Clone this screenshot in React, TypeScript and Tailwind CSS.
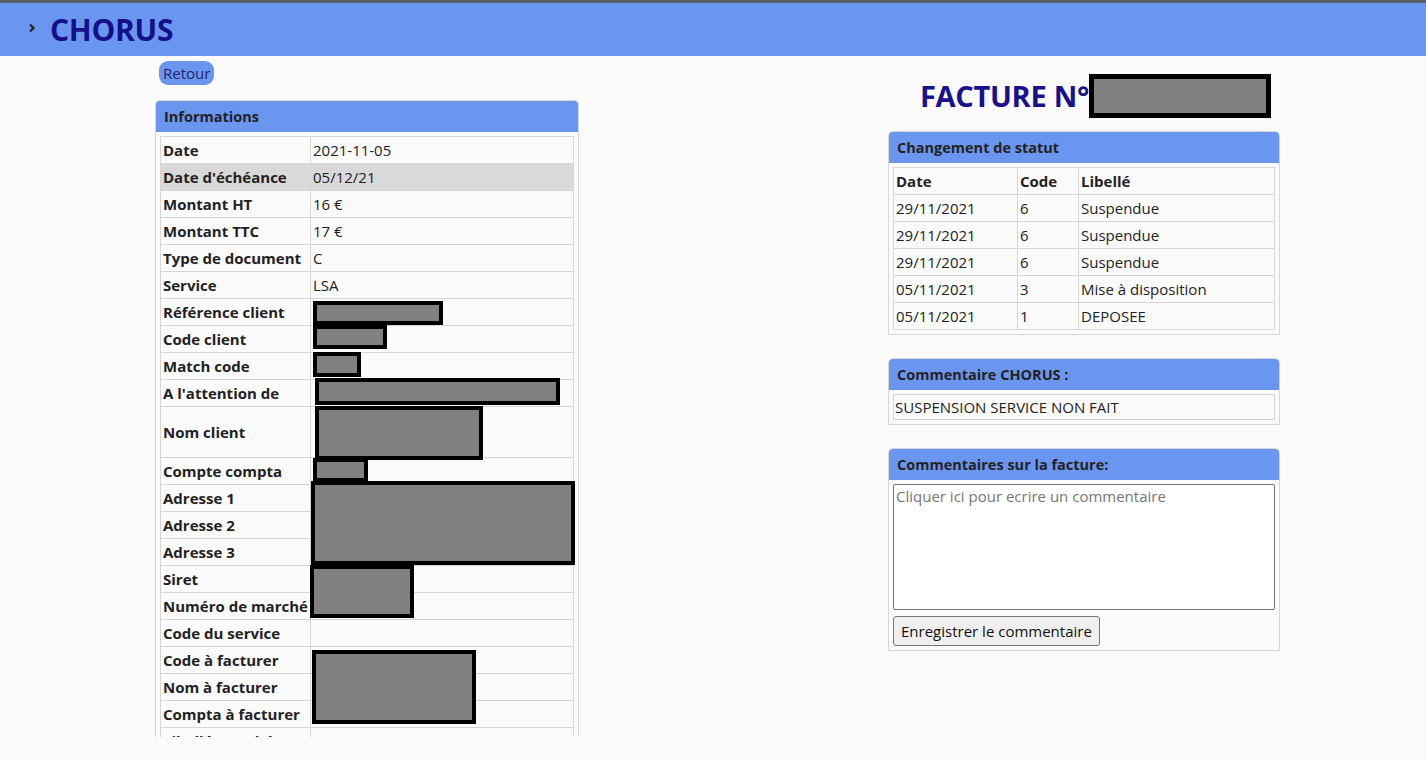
import React from "react";

type Row = { label: string; value?: string; tall?: boolean; shaded?: boolean };

const infoRows: Row[] = [
  { label: "Date", value: "2021-11-05" },
  { label: "Date d'échéance", value: "05/12/21", shaded: true },
  { label: "Montant HT", value: "16 €" },
  { label: "Montant TTC", value: "17 €" },
  { label: "Type de document", value: "C" },
  { label: "Service", value: "LSA" },
  { label: "Référence client" },
  { label: "Code client" },
  { label: "Match code" },
  { label: "A l'attention de" },
  { label: "Nom client", tall: true },
  { label: "Compte compta" },
  { label: "Adresse 1" },
  { label: "Adresse 2" },
  { label: "Adresse 3" },
  { label: "Siret" },
  { label: "Numéro de marché" },
  { label: "Code du service" },
  { label: "Code à facturer" },
  { label: "Nom à facturer" },
  { label: "Compta à facturer" },
  { label: "Libellé marché" },
];

// redacted blocks, relative to the informations table
const masks = [
  { l: 153, t: 165, w: 130, h: 24 },
  { l: 153, t: 189, w: 74, h: 24 },
  { l: 153, t: 216, w: 48, h: 25 },
  { l: 155, t: 242, w: 245, h: 27 },
  { l: 155, t: 270, w: 168, h: 54 },
  { l: 153, t: 322, w: 55, h: 24 },
  { l: 151, t: 345, w: 264, h: 84 },
  { l: 150, t: 429, w: 104, h: 53 },
  { l: 152, t: 514, w: 164, h: 74 },
];

const statuts = [
  ["29/11/2021", "6", "Suspendue"],
  ["29/11/2021", "6", "Suspendue"],
  ["29/11/2021", "6", "Suspendue"],
  ["05/11/2021", "3", "Mise à disposition"],
  ["05/11/2021", "1", "DEPOSEE"],
];

function Panel({ title, children, className = "" }: { title: string; children: React.ReactNode; className?: string }) {
  return (
    <div className={`border border-[#d6d6d6] rounded-t-[5px] bg-[#fbfbfb] ${className}`}>
      <div className="h-[31px] bg-[#6b96ef] rounded-t-[4px] px-[8px] flex items-center text-[14.5px] font-bold text-[#222]">
        {title}
      </div>
      <div className="p-[4px]">{children}</div>
    </div>
  );
}

const cell = "border border-[#d6d6d6] px-[2px] py-0 h-[27px] leading-[20px] align-middle text-left";

export default function App() {
  return (
    <div className="h-screen overflow-hidden bg-[#fbfbfb] font-['Open_Sans',sans-serif] text-[15px] text-[#222]">
      <div className="h-[3px] bg-[#565e68]" />
      <header className="h-[53px] bg-[#6b96ef] flex items-center pl-[28px]">
        <svg width="8" height="10" viewBox="0 0 8 10" className="mr-[14px] -mt-[4px]">
          <polyline points="2,1.5 5.5,5 2,8.5" fill="none" stroke="#222" strokeWidth="2.2" />
        </svg>
        <span className="text-[30px] font-bold text-[#14108a] tracking-[-0.3px]">CHORUS</span>
      </header>

      <div className="flex pl-[155px]">
        <div className="w-[424px]">
          <button className="ml-[4px] mt-[5px] h-[24px] px-[4px] rounded-[9px] bg-[#6b96ef] text-[15px] text-[#232370] leading-[24px]">
            Retour
          </button>
          <div className="mt-[15px] h-[637px] overflow-hidden">
            <Panel title="Informations" className="border-b-0">
              <div className="relative">
                <table className="w-full border-collapse border border-[#d6d6d6]">
                  <tbody>
                    {infoRows.map((r) => (
                      <tr key={r.label} className={r.shaded ? "bg-[#d9d9d9]" : ""}>
                        <td className={`${cell} w-[150px] font-bold whitespace-nowrap ${r.tall ? "h-[51px]" : ""}`}>{r.label}</td>
                        <td className={cell}>{r.value ?? ""}</td>
                      </tr>
                    ))}
                  </tbody>
                </table>
                {masks.map((m, i) => (
                  <div
                    key={i}
                    className="absolute border-[4px] border-black bg-[#808080]"
                    style={{ left: m.l, top: m.t, width: m.w, height: m.h }}
                  />
                ))}
              </div>
            </Panel>
          </div>
        </div>

        <div className="ml-[309px] w-[392px] pt-[18px]">
          <div className="flex items-center pl-[32px] h-[44px]">
            <span className="text-[29px] font-bold text-[#18108c] tracking-[-0.3px]">FACTURE N°</span>
            <span className="inline-block w-[182px] h-[44px] border-[5px] border-black bg-[#808080]" />
          </div>

          <Panel title="Changement de statut" className="mt-[13px]">
            <table className="w-full border-collapse border border-[#d6d6d6]">
              <thead>
                <tr>
                  <th className={`${cell} w-[124px]`}>Date</th>
                  <th className={`${cell} w-[61px]`}>Code</th>
                  <th className={cell}>Libellé</th>
                </tr>
              </thead>
              <tbody>
                {statuts.map((s, i) => (
                  <tr key={i}>
                    {s.map((v, j) => (
                      <td key={j} className={cell}>{v}</td>
                    ))}
                  </tr>
                ))}
              </tbody>
            </table>
          </Panel>

          <Panel title="Commentaire CHORUS :" className="mt-[23px]">
            <div className="border border-[#d6d6d6] h-[26px] leading-[24px] px-[1px]">SUSPENSION SERVICE NON FAIT</div>
          </Panel>

          <Panel title="Commentaires sur la facture:" className="mt-[23px]">
            <textarea
              className="block w-full h-[126px] border border-[#767676] rounded-[2px] bg-white px-[2px] py-[1px] text-[15px] leading-[20px] resize-none placeholder:text-[#767676] font-['Open_Sans',sans-serif]"
              placeholder="Cliquer ici pour ecrire un commentaire"
            />
            <button className="mt-[6px] h-[30px] px-[7px] border border-[#767676] rounded-[3px] bg-[#efefef] text-[15px] text-[#111]">
              Enregistrer le commentaire
            </button>
          </Panel>
        </div>
      </div>
    </div>
  );
}
